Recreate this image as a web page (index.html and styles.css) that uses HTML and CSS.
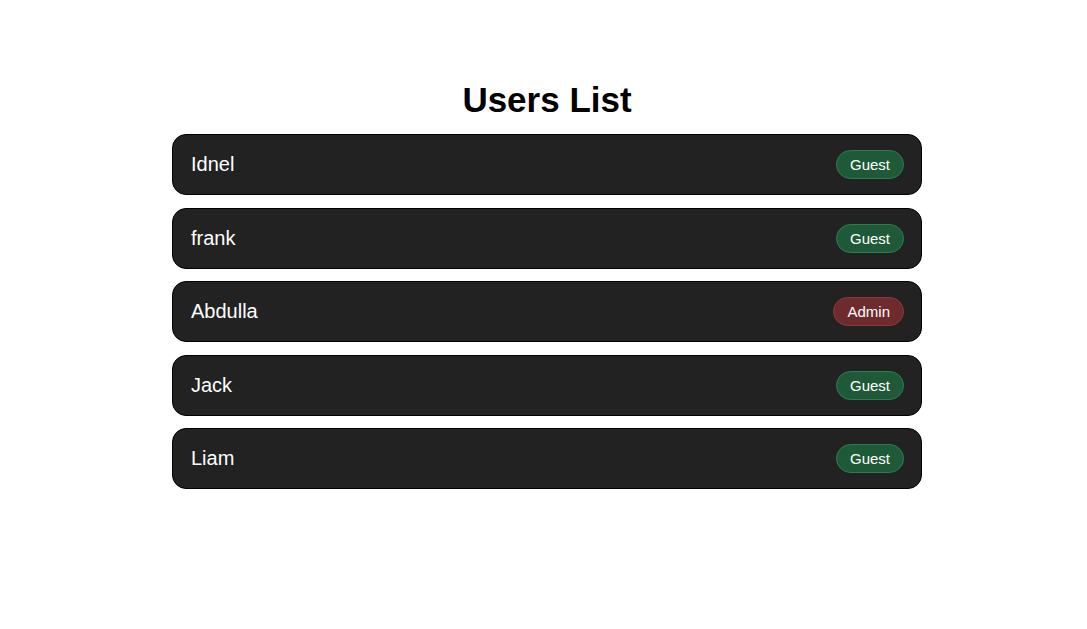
FILE: index.html
```html
<!DOCTYPE html>
<html>
<head>
<meta charset="utf-8">
<link rel="stylesheet" href="styles.css">
</head>
<body>
<main class="page">
  <h1 class="title">Users List</h1>
  <ul class="users">
    <li class="user"><span class="name">Idnel</span><span class="badge guest">Guest</span></li>
    <li class="user"><span class="name">frank</span><span class="badge guest">Guest</span></li>
    <li class="user"><span class="name">Abdulla</span><span class="badge admin">Admin</span></li>
    <li class="user"><span class="name">Jack</span><span class="badge guest">Guest</span></li>
    <li class="user"><span class="name">Liam</span><span class="badge guest">Guest</span></li>
  </ul>
</main>
</body>
</html>
```
FILE: styles.css
```css
html, body {
  margin: 0;
  padding: 0;
  background: #ffffff;
  font-family: "Liberation Sans", Arial, sans-serif;
}
body {
  padding-left: 7px;
}
.page {
  width: 750px;
  margin: 0 auto;
  padding-top: 80px;
}
.title {
  margin: 0 0 14px;
  font-size: 35px;
  line-height: 40px;
  font-weight: bold;
  text-align: center;
  color: #000;
}
.users {
  list-style: none;
  margin: 0;
  padding: 0;
  display: flex;
  flex-direction: column;
  gap: 12.5px;
}
.user {
  display: flex;
  align-items: center;
  justify-content: space-between;
  height: 61px;
  box-sizing: border-box;
  background: #222222;
  border: 1px solid #000000;
  border-radius: 14px;
  padding: 0 17px 0 18px;
  color: #ffffff;
}
.name {
  font-size: 20px;
  line-height: 23px;
}
.badge {
  font-size: 15px;
  line-height: 17px;
  padding: 5px 13px;
  border-radius: 15px;
  border: 1px solid;
  color: #ffffff;
}
.guest {
  background: #1e5a38;
  border-color: #2f7d4e;
}
.admin {
  background: #6e2a2c;
  border-color: #8c3a3c;
}
```
